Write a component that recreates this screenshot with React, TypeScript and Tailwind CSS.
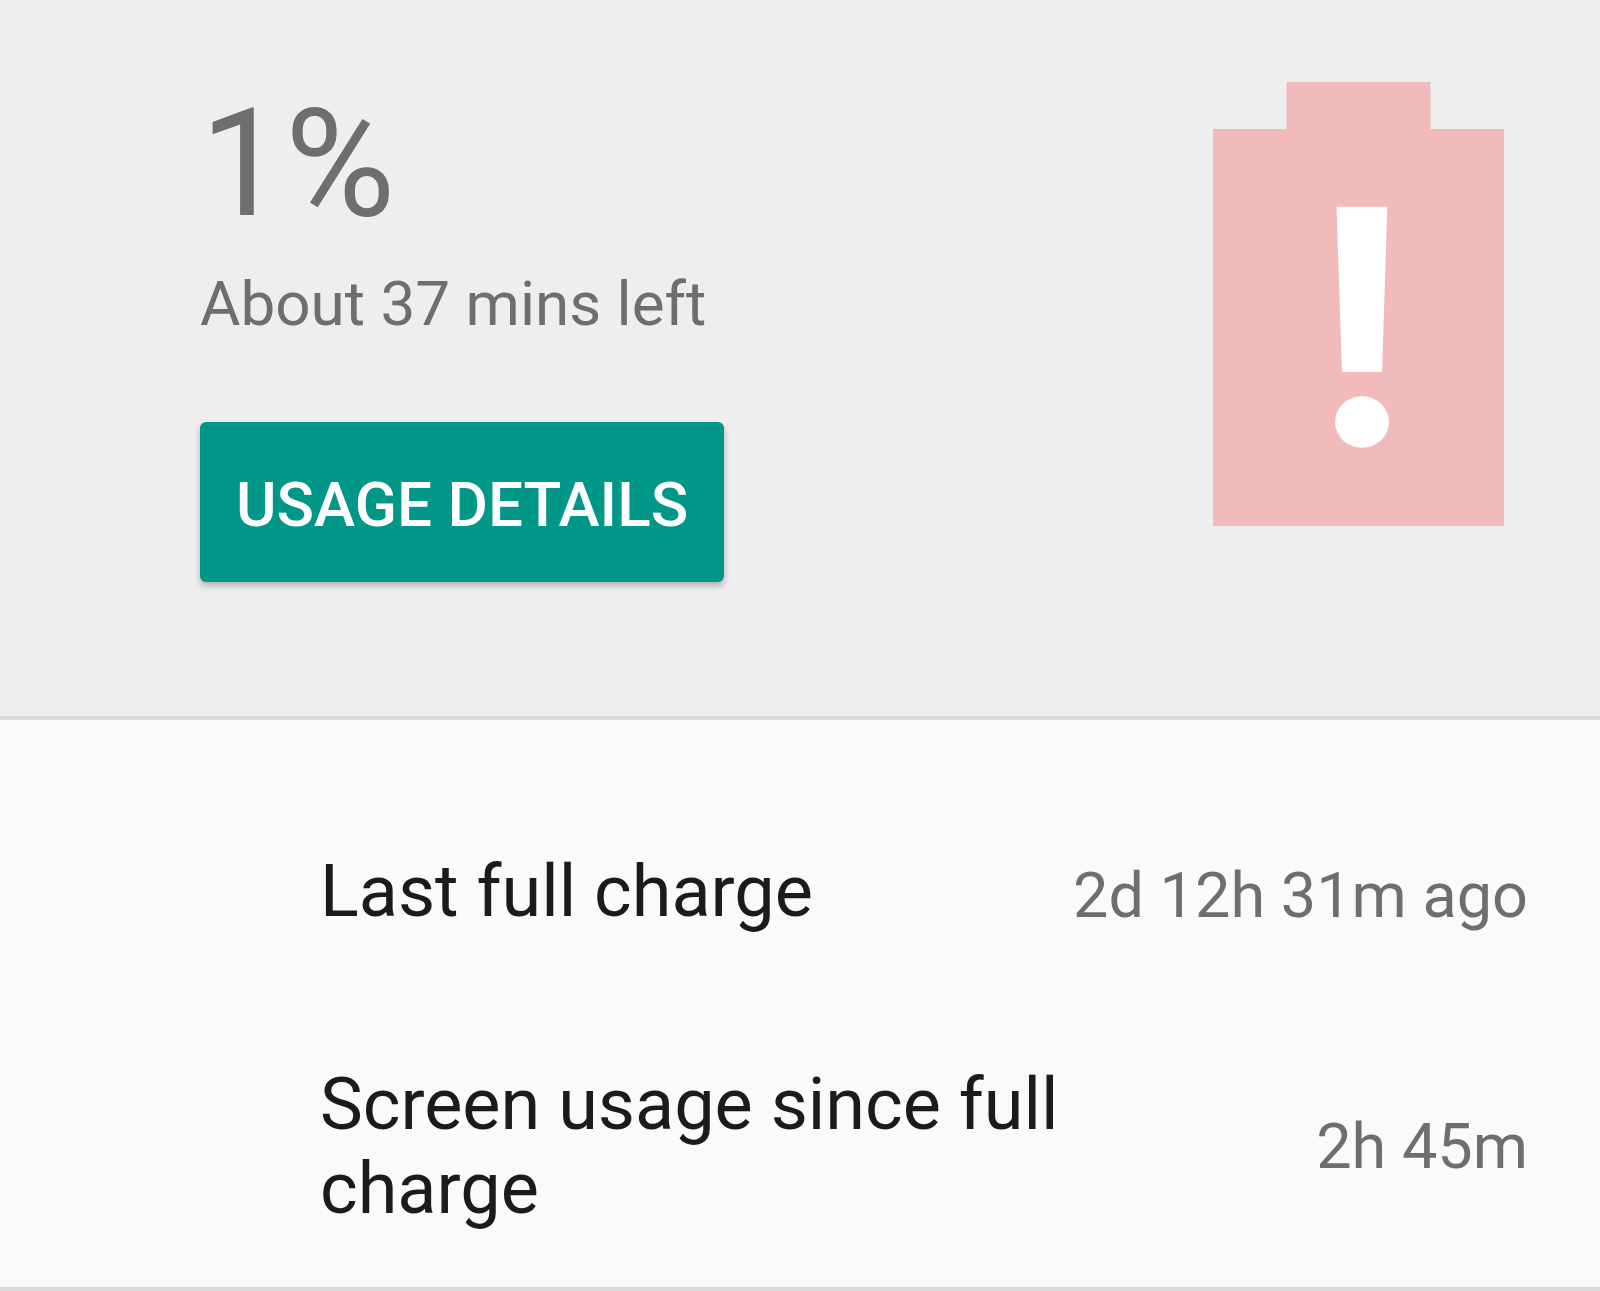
const stats = [
  { label: "Last full charge", value: "2d 12h 31m ago" },
  { label: "Screen usage since full charge", value: "2h 45m" },
];

function BatteryIcon() {
  return (
    <svg viewBox="0 0 291 444" className="h-[444px] w-[291px] shrink-0" role="img" aria-label="Battery critically low">
      <path d="M73.5 0H217.5V47H291V444H0V47H73.5Z" fill="#f1bbbb" />
      <path d="M123.5 124.7H174.3L169 290H129Z" fill="#fff" />
      <ellipse cx="149" cy="340" rx="27" ry="25.7" fill="#fff" />
    </svg>
  );
}

export default function App() {
  return (
    <main className="bg-[#fafafa] font-[Roboto,sans-serif] text-[#1b1b1b]">
      <section className="flex items-start justify-between border-b-4 border-[#d9d9d9] bg-[#eeeeee] pt-[82px] pr-24 pb-[134px] pl-[200px]">
        <div className="text-[#6e6e6e]">
          <h1 className="text-[151px] leading-[164px]">1%</h1>
          <p className="mt-[18px] text-[62px] leading-20">About 37 mins left</p>
          <button className="mt-[78px] h-40 rounded-md bg-[#009688] px-9 pt-1 text-[62px] font-medium text-white shadow-[0_4px_6px_rgba(0,0,0,0.25)]">
            USAGE DETAILS
          </button>
        </div>
        <BatteryIcon />
      </section>
      <dl className="border-b-4 border-[#d9d9d9] pt-[130px] pr-[72px] pb-14 pl-80">
        {stats.map((s) => (
          <div key={s.label} className="mb-[129px] flex items-center justify-between first:items-end last:mb-0">
            <dt className="max-w-[760px] text-[72px] leading-[84px]">{s.label}</dt>
            <dd className="text-[63px] leading-[76px] text-[#6e6e6e]">{s.value}</dd>
          </div>
        ))}
      </dl>
    </main>
  );
}
